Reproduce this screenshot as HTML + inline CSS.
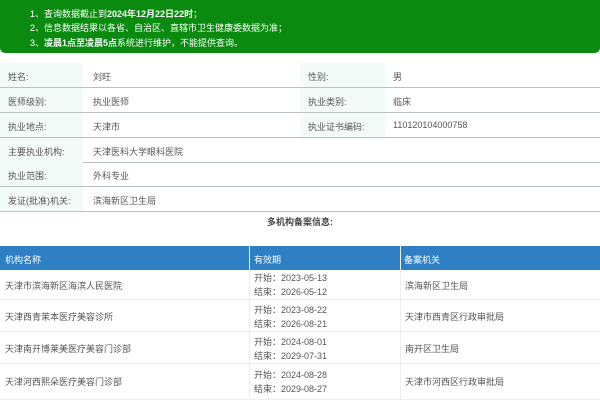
<!DOCTYPE html><html><head><meta charset="utf-8"><style>
*{margin:0;padding:0;box-sizing:border-box}
body{width:600px;height:400px;overflow:hidden;background:#fff;font-family:"Liberation Sans","Noto Sans CJK SC",sans-serif;font-size:9px;color:#555;position:relative}
.ban{position:absolute;left:0;top:0;width:600px;height:53px;background:#0a8a0f;border-radius:0 0 5px 5px;color:#fff}
.ban div{position:absolute;left:30px;font-size:9px}
.r{position:absolute;left:0;width:600px;height:25px;border-bottom:1px solid #b8c0c0}
.r span{position:absolute;top:7px}
.l{position:absolute;top:0;height:24px;background:#f3fbf8}
.h{position:absolute;top:246px;left:0;width:600px;height:24px;background:#2f7fc4;color:#fff}
.h span,.d span{position:absolute}
.d{position:absolute;left:0;width:600px;border-bottom:1px solid #eee}
.v{position:absolute;top:0;width:1px;background:#eee}
</style></head><body>
<div class="ban">
<div style="top:7px">1、查询数据截止到<b>2024年12月22日22时</b>；</div>
<div style="top:21px">2、信息数据结果以各省、自治区、直辖市卫生健康委数据为准；</div>
<div style="top:36px">3、<b>凌晨1点至凌晨5点</b>系统进行维护，不能提供查询。</div>
</div>
<div class="r" style="top:63px"><div class="l" style="left:0;width:83px"></div><div class="l" style="left:300px;width:85px"></div><span style="left:8px">姓名:</span><span style="left:93px">刘旺</span><span style="left:308px">性别:</span><span style="left:393px">男</span></div>
<div class="r" style="top:88px"><div class="l" style="left:0;width:83px"></div><div class="l" style="left:300px;width:85px"></div><span style="left:8px">医师级别:</span><span style="left:93px">执业医师</span><span style="left:308px">执业类别:</span><span style="left:393px">临床</span></div>
<div class="r" style="top:113px"><div class="l" style="left:0;width:83px"></div><div class="l" style="left:300px;width:85px"></div><span style="left:8px">执业地点:</span><span style="left:93px">天津市</span><span style="left:308px">执业证书编码:</span><span style="left:393px">110120104000758</span></div>
<div class="r" style="top:138px"><div class="l" style="left:0;width:83px"></div><span style="left:8px">主要执业机构:</span><span style="left:93px">天津医科大学眼科医院</span></div>
<div class="r" style="top:162px"><div class="l" style="left:0;width:83px"></div><span style="left:8px">执业范围:</span><span style="left:93px">外科专业</span></div>
<div class="r" style="top:187px"><div class="l" style="left:0;width:83px"></div><span style="left:8px">发证(批准)机关:</span><span style="left:93px">滨海新区卫生局</span></div>
<div style="position:absolute;top:215px;left:0;width:600px;text-align:center;font-weight:bold;color:#444">多机构备案信息:</div>
<div class="h"><span style="left:5px;top:7px">机构名称</span><span style="left:254px;top:7px">有效期</span><span style="left:404px;top:7px">备案机关</span></div>
<div class="v" style="left:249px;top:246px;height:154px"></div><div class="v" style="left:400px;top:246px;height:154px"></div>
<div class="d" style="top:270px;height:30px"><span style="left:5px;top:9px">天津市滨海新区海滨人民医院</span><span style="left:254px;top:1px">开始：2023-05-13</span><span style="left:254px;top:15px">结束：2026-05-12</span><span style="left:405px;top:9px">滨海新区卫生局</span></div>
<div class="d" style="top:300px;height:32px"><span style="left:5px;top:10px">天津西青茉本医疗美容诊所</span><span style="left:254px;top:3px">开始：2023-08-22</span><span style="left:254px;top:17px">结束：2026-08-21</span><span style="left:405px;top:10px">天津市西青区行政审批局</span></div>
<div class="d" style="top:332px;height:32px"><span style="left:5px;top:10px">天津南开博莱美医疗美容门诊部</span><span style="left:254px;top:3px">开始：2024-08-01</span><span style="left:254px;top:17px">结束：2029-07-31</span><span style="left:405px;top:10px">南开区卫生局</span></div>
<div class="d" style="top:364px;height:36px"><span style="left:5px;top:11px">天津河西熙朵医疗美容门诊部</span><span style="left:254px;top:4px">开始：2024-08-28</span><span style="left:254px;top:18px">结束：2029-08-27</span><span style="left:405px;top:11px">天津市河西区行政审批局</span></div>
</body></html>
